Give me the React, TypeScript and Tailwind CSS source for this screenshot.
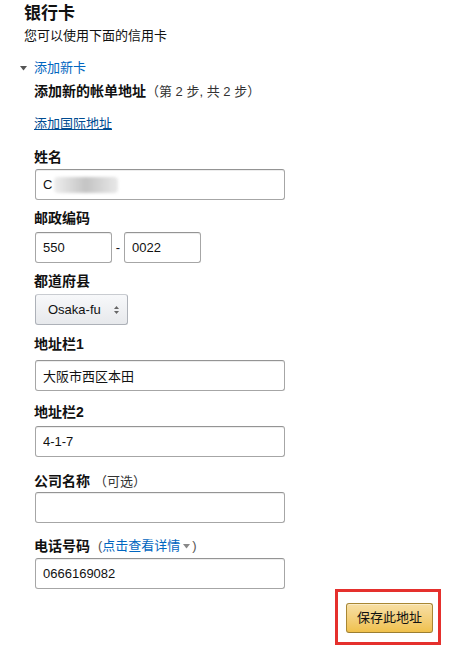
import React from "react";

const inputCls =
  "h-[31px] rounded-[3px] border border-[#a6a6a6] border-t-[#949494] bg-white px-[7px] text-[13px] text-[#111] shadow-[inset_0_1px_0_rgba(0,0,0,0.07)] outline-none";

function Label({ children, className = "" }: { children: React.ReactNode; className?: string }) {
  return <div className={"h-[20px] text-[14px] leading-[20px] font-bold text-[#111] " + className}>{children}</div>;
}

export default function App() {
  return (
    <div className="w-[451px] h-[648px] bg-white overflow-hidden font-['Liberation_Sans','Noto_Sans_CJK_SC',sans-serif] text-[#111]">
      <div className="pl-[24px] pt-[3px]">
        <h1 className="text-[17px] leading-[22px] font-bold">银行卡</h1>
        <p className="mt-[2px] text-[13px] leading-[18px]">您可以使用下面的信用卡</p>
      </div>

      <div className="mt-[13px] flex h-[20px] items-center pl-[20px]">
        <svg width="7" height="5" viewBox="0 0 7 5" className="mr-[7px]">
          <path d="M0 0 L7 0 L3.5 4.5 Z" fill="#555" />
        </svg>
        <span className="text-[13px] leading-[20px] text-[#0066c0]">添加新卡</span>
      </div>

      <div className="pl-[34px]">
        <div className="mt-[3px] h-[20px] text-[14px] leading-[20px]">
          <span className="font-bold">添加新的帐单地址</span>
          <span className="text-[13px] text-[#333]">（第 2 步, 共 2 步）</span>
        </div>

        <div className="mt-[13px] h-[20px] text-[13px] leading-[20px]">
          <span className="text-[#004b91] underline">添加国际地址</span>
        </div>

        <Label className="mt-[13px]">姓名</Label>
        <div className={"mt-[2px] ml-[1px] w-[250px] flex items-center " + inputCls}>
          <span>C</span>
          <div className="ml-[2px] h-[16px] w-[64px] rounded-[4px] bg-gradient-to-r from-[#eeeeee] via-[#c4c4c4] to-[#e8e8e8] blur-[1.5px]" />
        </div>

        <Label className="mt-[8px]">邮政编码</Label>
        <div className="mt-[4px] ml-[1px] flex items-center">
          <input readOnly value="550" className={"w-[77px] " + inputCls} />
          <span className="w-[12px] text-center text-[13px]">-</span>
          <input readOnly value="0022" className={"w-[77px] " + inputCls} />
        </div>

        <Label className="mt-[8px]">都道府县</Label>
        <div className="mt-[3px] ml-[1px] flex h-[31px] w-[93px] items-center justify-between rounded-[3px] border border-[#adb1b8] border-t-[#c9ccd1] bg-gradient-to-b from-[#f7f8fa] to-[#e7e9ec] pl-[12px] pr-[8px] text-[13px] text-[#111]">
          <span>Osaka-fu</span>
          <svg width="5" height="8" viewBox="0 0 5 8">
            <path d="M0 3 L2.5 0 L5 3 Z" fill="#666" />
            <path d="M0 5 L5 5 L2.5 8 Z" fill="#666" />
          </svg>
        </div>

        <Label className="mt-[9px]">地址栏1</Label>
        <input readOnly value="大阪市西区本田" className={"mt-[6px] ml-[1px] block w-[250px] " + inputCls} />

        <Label className="mt-[11px]">地址栏2</Label>
        <input readOnly value="4-1-7" className={"mt-[4px] ml-[1px] block w-[250px] " + inputCls} />

        <Label className="mt-[14px]">
          公司名称 <span className="font-normal text-[13px] text-[#333]">（可选）</span>
        </Label>
        <input readOnly value="" className={"mt-[1px] ml-[1px] block w-[250px] " + inputCls} />

        <Label className="mt-[13px] flex items-center">
          <span>电话号码</span>
          <span className="ml-[8px] font-normal text-[13px] text-[#555]">(</span>
          <span className="font-normal text-[13px] text-[#0066c0]">点击查看详情</span>
          <svg width="7" height="5" viewBox="0 0 7 5" className="ml-[3px] mr-[2px]">
            <path d="M0 0 L7 0 L3.5 4.5 Z" fill="#888" />
          </svg>
          <span className="font-normal text-[13px] text-[#555]">)</span>
        </Label>
        <input readOnly value="0666169082" className={"mt-[2px] ml-[1px] block w-[250px] " + inputCls} />
      </div>

      <div className="flex justify-end pr-[10px]">
        <div className="h-[56px] w-[106px] border-[3px] border-[#e5302d] pl-[8px] pt-[11px]">
          <button className="flex h-[30px] w-[87px] items-center justify-center rounded-[3px] border border-[#a88734] border-b-[#9c7e31] bg-gradient-to-b from-[#f7dfa5] to-[#f0c14b] text-[13px] text-[#111] shadow-[inset_0_1px_0_rgba(255,255,255,0.4)]">
            保存此地址
          </button>
        </div>
      </div>
    </div>
  );
}
